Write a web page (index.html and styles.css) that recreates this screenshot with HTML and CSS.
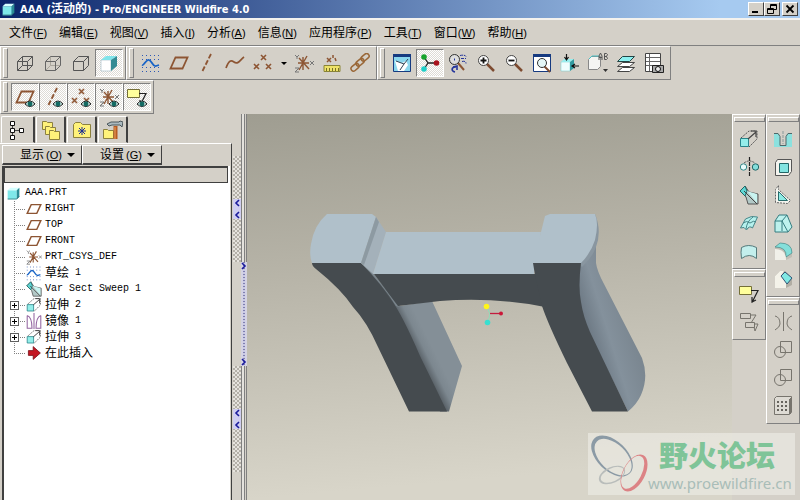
FILE: index.html
```html
<!DOCTYPE html>
<html lang="zh-CN">
<head>
<meta charset="utf-8">
<title>AAA (活动的) - Pro/ENGINEER Wildfire 4.0</title>
<link rel="stylesheet" href="styles.css">
</head>
<body>
<svg class="sprite" aria-hidden="true">
  <symbol id="part" viewBox="0 0 20 20"><path fill="#7fe8ea" d="M1 5h14v14H1z"/><path fill="#d5ffff" d="M1 5l4-4h14l-4 4z"/><path fill="#2b8c96" d="M15 5l4-4v14l-4 4z"/><path fill="none" stroke="#1d5c66" d="M1 18.500h14l4-4"/></symbol>
  <symbol id="wire" viewBox="0 0 20 20"><path d="M2.500 8.500h10v9h-10zM7.500 3.500h10v9h-10zM2.500 8.500l5-5M12.500 8.500l5-5M12.500 17.500l5-5M2.500 17.500l5-5" fill="none" stroke="#555"/></symbol>
  <symbol id="hidden" viewBox="0 0 20 20"><path d="M7.500 3.500v9h10M2.500 17.500l5-5" fill="none" stroke="#aaa69c"/><path d="M2.500 8.500h10v9h-10zM2.500 8.500l5-5h10v9l-5 5M12.500 8.500l5-5" fill="none" stroke="#666"/></symbol>
  <symbol id="nohidden" viewBox="0 0 20 20"><path d="M2.500 8.500h10v9h-10zM2.500 8.500l5-5h10v9l-5 5M12.500 8.500l5-5" fill="none" stroke="#555"/></symbol>
  <symbol id="shaded" viewBox="0 0 20 20"><path fill="#fff" stroke="#8ab" stroke-width=".5" d="M2 7h10v11H2z"/><path fill="#7fe4ea" d="M2 7l5-4h11l-6 4z"/><path fill="#348b94" d="M12 7l6-4v10l-6 5z"/></symbol>
  <symbol id="sketch" viewBox="0 0 20 20"><path d="M1 2.500h18M1 6.500h18M1 14.500h18M1 18.500h18" stroke="#2d58b5" stroke-dasharray="1 3"/><path d="M1 12c2 1 3-4 6-5 4-1 4 7 8 6l3-1" fill="none" stroke="#1763c6" stroke-width="1.800"/></symbol>
  <symbol id="plane" viewBox="0 0 20 20"><path d="M6.500 4.500h12l-5 11h-12z" fill="none" stroke="#8d5533" stroke-width="1.800"/></symbol>
  <symbol id="axis" viewBox="0 0 20 20"><path d="M14 1L5 19" stroke="#8d5533" stroke-width="1.800" stroke-dasharray="5 2"/></symbol>
  <symbol id="curve" viewBox="0 0 20 20"><path d="M1 15c3-8 5-8 8-6 4 3 6-2 10-5" fill="none" stroke="#8d5533" stroke-width="1.700"/></symbol>
  <symbol id="points" viewBox="0 0 20 20"><path d="M8 2l5 5m0-5L8 7M1 11l5 5m0-5l-5 5M13 11l5 5m0-5l-5 5" stroke="#8d5533" stroke-width="1.600"/></symbol>
  <symbol id="csys" viewBox="0 0 20 20"><path d="M5 5l10 11M13 3L5 17M9 4v13M4 10h11" stroke="#8d5533" stroke-width="1.400"/><path d="M1 2l2 2 2-2M3 4v2M16 8l4 4m0-4l-4 4M1 15h4l-4 4h4" fill="none" stroke="#777"/></symbol>
  <symbol id="measure" viewBox="0 0 20 20"><path d="M5 5l4 4m0-4L5 9M11 2v3M13 5l1 3" stroke="#8d5533" stroke-width="1.500"/><path fill="#eee268" stroke="#8a8436" d="M2 12.500h16v6H2z"/><path d="M4.500 15v3M7.500 15v3M10.500 15v3M13.500 15v3M16.500 15v3" stroke="#77702a"/></symbol>
  <symbol id="chain" viewBox="0 0 20 20"><g fill="none" stroke="#9a6737" stroke-width="1.500"><rect x="11" y="2" width="9" height="5" rx="2.500" transform="rotate(-40 15 5)"/><rect x="6" y="7" width="9" height="5" rx="2.500" transform="rotate(-40 10 10)"/><rect x="1" y="12" width="9" height="5" rx="2.500" transform="rotate(-40 5 15)"/></g></symbol>
  <symbol id="repaint" viewBox="0 0 20 20"><path fill="#8bd7ee" stroke="#163a80" d="M1.500 1.500h17v17h-17z"/><path fill="#163a80" d="M1 1h18v3H1z"/><path fill="#fff" d="M3 8l7 2 4-2 2 4-4 6H6z"/><path d="M4 8l8 3 4-5M12 11l-4 6" fill="none" stroke="#345"/></symbol>
  <symbol id="spin" viewBox="0 0 20 20"><path d="M4 4l4 6-4 6M8 10h9" fill="none" stroke="#222" stroke-width="1.300"/><circle cx="4" cy="4" r="2.800" fill="#16a32b"/><circle cx="4" cy="16" r="2.800" fill="#20cfc8"/><circle cx="16.500" cy="10" r="2.800" fill="#a9131e"/></symbol>
  <symbol id="orient" viewBox="0 0 20 20"><path d="M10 10l6 7" stroke="#8d5533" stroke-width="2"/><circle cx="6.500" cy="6.500" r="5" fill="#ddd" stroke="#333"/><path d="M6.500 5.500v2M12 2.500q5-1 6 1M13 5.500h5M14 8.500q4-1 4 2" fill="none" stroke="#24359c" stroke-dasharray="3 1"/><path d="M8 14c-5 0-5 4-1 5M5 14l4-1v4" fill="none" stroke="#24359c" stroke-width="1.600"/></symbol>
  <symbol id="zoomin" viewBox="0 0 20 20"><path d="M11 11l7 7" stroke="#7d4b30" stroke-width="2.500"/><circle cx="7.500" cy="7.500" r="5" fill="#fff" stroke="#444"/><path d="M4.500 7.500h6M7.500 4.500v6" stroke="#111" stroke-width="1.800"/></symbol>
  <symbol id="zoomout" viewBox="0 0 20 20"><path d="M11 11l7 7" stroke="#7d4b30" stroke-width="2.500"/><circle cx="7.500" cy="7.500" r="5" fill="#fff" stroke="#444"/><path d="M4.500 7.500h6" stroke="#111" stroke-width="1.800"/></symbol>
  <symbol id="refit" viewBox="0 0 20 20"><path fill="#fff" stroke="#163a80" d="M1.500 1.500h17v17h-17z"/><path fill="#163a80" d="M1 1h18v3H1z"/><path d="M12 13l6 6" stroke="#7d4b30" stroke-width="2"/><circle cx="10" cy="10" r="4.500" fill="#e5f7f7" stroke="#333"/></symbol>
  <symbol id="views" viewBox="0 0 20 20"><path fill="#effefe" stroke="#7cc" stroke-width=".5" d="M1 9h9v9H1z"/><path fill="#9ee" d="M1 9l3-3h10l-4 3z"/><path fill="#339a9f" d="M10 9l4-3v9l-4 3z"/><path d="M6.500 1v5M4.500 4l2 3 2-3M19 13h-6M15 11l-3 2 3 2" fill="none" stroke="#111" stroke-width="1.200"/></symbol>
  <symbol id="saved" viewBox="0 0 20 20"><path fill="#f5f5f3" stroke="#888" d="M.5 6.500l3-3h9v10l-3 3h-9z"/><path d="M1 6l3-3h7" fill="none" stroke="#49bfc5"/><path d="M11 7V3l1.500-3L14 3v4M11 4.500h3M16.500.500v6h2l1-1-1-2h-2 2l1-2-1-1z" fill="none" stroke="#555"/><path fill="#333" d="M15 16h5l-2.500 3z"/></symbol>
  <symbol id="layers" viewBox="0 0 20 20"><path d="M1.500 18.500l5-4h12l-5 4zM1.500 13.500l5-4h12l-5 4z" fill="#fff" stroke="#444"/><path d="M1.500 8.500l5-5h12l-5 5z" fill="#8cf0f0" stroke="#244"/></symbol>
  <symbol id="manager" viewBox="0 0 20 20"><path fill="#fff" stroke="#444" d="M1.500.5h15v18h-15z"/><path d="M2 4.500h14M2 8.500h14M2 12.500h8M5.500 1v17" stroke="#666"/><path fill="#aaa" stroke="#222" d="M8.500 12.500h11v7h-11z"/><circle cx="14" cy="16" r="2.500" fill="#eee" stroke="#111"/></symbol>
  <symbol id="eye" viewBox="0 0 20 20"><path d="M10 17q5-6 10 0q-5 5-10 0z" fill="#c6e4df" stroke="#222"/><circle cx="15" cy="17" r="2.400" fill="#146a62"/></symbol>
  <symbol id="note" viewBox="0 0 20 20"><path d="M.5 2.500h12v8H.500z" fill="#ffff9c" stroke="#746f37"/><path d="M12 6.500h7l-6 12M13 13v5l4-2" fill="none" stroke="#222" stroke-width="1.200"/></symbol>
  <symbol id="treeicon" viewBox="0 0 20 20"><path d="M4.500 3v14M5 10.500h10" stroke="#444"/><path d="M2.500 1.500h4v4h-4zM2.500 8.500h4v4h-4zM2.500 15.500h4v4h-4zM11.500 8.500h4v4h-4z" fill="#fff" stroke="#111"/></symbol>
  <symbol id="folder" viewBox="0 0 20 20"><path d="M1.500 17.500v-13l2-2h5l2 2h8v13z" fill="#fff27a" stroke="#8c813e"/></symbol>
  <symbol id="folders" viewBox="0 0 20 20"><g fill="#fff27a" stroke="#8c813e"><path d="M1.500 9.500v-8h4l1 1h5v7z"/><path d="M4.500 14.500v-8h4l1 1h5v7z"/><path d="M8.500 19.500v-9h4l1 1h5v8z"/></g></symbol>
  <symbol id="favorite" viewBox="0 0 20 20"><use href="#folder"/><path d="M10 7v8M6 11h8M7 8l6 6M13 8l-6 6" stroke="#1c2f93"/></symbol>
  <symbol id="hammer" viewBox="0 0 20 20"><path d="M.5 18.500v-9h4l1 1h5v8z" fill="#fff27a" stroke="#8c813e"/><path d="M12.500 6v13" stroke="#b75b22" stroke-width="4"/><path d="M12 7v12" stroke="#eda35c"/><path d="M4 4l4-2h8l1-1 3 1-1 5-2-2H9L6 6z" fill="#aab9bf" stroke="#4c575b"/></symbol>
  <symbol id="extrude" viewBox="0 0 20 20"><path d="M2 9l8-7h8v8l-8 8" fill="none" stroke="#555" stroke-dasharray="2 1"/><path d="M1.500 9.500h8v8h-8z" fill="#94eeea" stroke="#28858a"/><path d="M9 10l8-7M12 2h5v6" fill="none" stroke="#444" stroke-width="1.200"/></symbol>
  <symbol id="revolve" viewBox="0 0 20 20"><path d="M10.500 0v19" stroke="#222" stroke-width="1.200" stroke-dasharray="4 1"/><circle cx="4.500" cy="10" r="3.200" fill="#e8fbfa" stroke="#388"/><circle cx="16.500" cy="10" r="3.200" fill="#84dfdc" stroke="#266"/><path d="M5 6q5-4 11 0" fill="none" stroke="#555" stroke-dasharray="2 1"/></symbol>
  <symbol id="sweep" viewBox="0 0 20 20"><path d="M1 6l5-5 4 6 9 2v10H9L7 12z" fill="#b3c9c7" stroke="#555"/><path d="M1 6l5-5 2 5-2 5z" fill="#5fd8d6" stroke="#266"/><path d="M8 6l10 12V9z" fill="#c9f4f1"/><path d="M5 6l13 13" stroke="#444"/></symbol>
  <symbol id="blend" viewBox="0 0 20 20"><path d="M1.500 15l5-9q6-4 12-2l-5 11q-3-3-6 2-2-4-6-2z" fill="#b5f1ed" stroke="#478588"/><path d="M7 16q1-8 7-12M4 10q4-3 7 0 4-3 6-1" fill="none" stroke="#478588"/></symbol>
  <symbol id="style" viewBox="0 0 20 20"><path d="M2.500 17.500q-1-7 0-11 7-4 15 0v11q-7-6-15 0z" fill="#c3efed" stroke="#557a7b"/></symbol>
  <symbol id="hole" viewBox="0 0 20 20"><path d="M1 4h4l2 3v9h6V7l2-3h4v14H1z" fill="#8ce1de"/><path d="M1 4.500h4l2 3v9h6v-9l2-3h4" fill="none" stroke="#4e6668"/><path d="M10 2v13" stroke="#899" stroke-dasharray="3 1"/></symbol>
  <symbol id="shell" viewBox="0 0 20 20"><path d="M2.500 5.500l2-3h14v12l-3 4h-13z" fill="#f4f4ee" stroke="#555"/><path d="M6.500 6.500h9v9h-9z" fill="#82e4e0" stroke="#266"/></symbol>
  <symbol id="rib" viewBox="0 0 20 20"><path d="M2.500 17.500v-13l3-4v4l12 11-3 3z" fill="#f4f4ee" stroke="#666" stroke-dasharray="2 1"/><path d="M5.500 6.500v9h9z" fill="#8deae4" stroke="#276b6b"/></symbol>
  <symbol id="draft" viewBox="0 0 20 20"><path d="M2 8l4-6h8l5 12-4 5H2z" fill="#bdf1ed" stroke="#357d80"/><path d="M2 8h7l5-6M9 8v10M9 8l6 11" fill="none" stroke="#357d80"/></symbol>
  <symbol id="round" viewBox="0 0 20 20"><path d="M2 6l5-4q12 0 12 10v4l-6 3H2z" fill="#c1beb5"/><path d="M2 6l5-4q12 0 12 10l-6 4q1-10-11-10z" fill="#84dfda" stroke="#387d7d" stroke-width=".6"/><path d="M2 8q11 0 11 11H2z" fill="#f1f0e9"/></symbol>
  <symbol id="chamfer" viewBox="0 0 20 20"><path d="M2 7l5-5h5l7 7v7l-6 3H2z" fill="#b1aea4"/><path d="M2 7l5-5h4L8 7l5 6v6H2z" fill="#f4f2e9"/><path d="M8 7l4-4 7 6-5 6z" fill="#80e8e4" stroke="#357"/></symbol>
  <symbol id="notes" viewBox="0 0 20 20"><path d="M1.500 1.500h10v5h-10zM6.500 10.500h9v5h-9zM12 3h5l-5 8M15 12h4l-3 7-1-4" fill="none" stroke="#77746d"/></symbol>
  <symbol id="mirror" viewBox="0 0 20 20"><path d="M10.500 0v19M2 4q5 1 5 8 0 3-5 6M19 4q-5 1-5 8 0 3 5 6" fill="none" stroke="#77746d"/></symbol>
  <symbol id="mirrorc" viewBox="0 0 20 20"><path d="M10 0v20M1.500 3v16h6q0-14-6-16M18.500 3v16h-6q0-14 6-16" fill="none" stroke="#9364a0" stroke-width="1.300"/></symbol>
  <symbol id="merge" viewBox="0 0 20 20"><path d="M7.500 1.500h11v11h-11z" fill="none" stroke="#77746d"/><circle cx="7" cy="12" r="5.500" fill="none" stroke="#77746d"/></symbol>
  <symbol id="pattern" viewBox="0 0 20 20"><path d="M1.500 2.500l2-2h15v16l-2 2h-15z" fill="#dedbd4" stroke="#77746d"/><path d="M16.500 3v15M17.500 2v15" stroke="#77746d"/><path d="M4 6h11M4 10h11M4 14h11" stroke="#67645e" stroke-width="2" stroke-dasharray="2 2"/></symbol>
  <symbol id="arrow" viewBox="0 0 20 20"><path d="M3 7h6V2l9 8-9 8v-5H3z" fill="#c41622" stroke="#761018"/></symbol>
</svg>

<div class="app">
  <header class="titlebar">
    <svg class="app-icon" aria-hidden="true"><use href="#part"/></svg>
    <h1>AAA (<span>活动的</span>) - Pro/ENGINEER Wildfire 4.0</h1>
    <div class="window-buttons">
      <button aria-label="最小化"><svg viewBox="0 0 12 10"><path d="M2 8h6" stroke="#000" stroke-width="2"/></svg></button>
      <button aria-label="还原"><svg viewBox="0 0 12 10"><path d="M4.500 4V.500h6v5H8M4 1.500h7M1.500 4.500h6v5h-6zM1 5.500h7" fill="none" stroke="#000"/></svg></button>
      <button class="close" aria-label="关闭"><svg viewBox="0 0 12 10"><path d="M2.500 1.500l7 7M9.500 1.500l-7 7" stroke="#000" stroke-width="1.800"/></svg></button>
    </div>
  </header>

  <nav class="menubar">
    <button>文件<span>(<u>F</u>)</span></button>
    <button>编辑<span>(<u>E</u>)</span></button>
    <button>视图<span>(<u>V</u>)</span></button>
    <button>插入<span>(<u>I</u>)</span></button>
    <button>分析<span>(<u>A</u>)</span></button>
    <button>信息<span>(<u>N</u>)</span></button>
    <button>应用程序<span>(<u>P</u>)</span></button>
    <button>工具<span>(<u>T</u>)</span></button>
    <button>窗口<span>(<u>W</u>)</span></button>
    <button>帮助<span>(<u>H</u>)</span></button>
  </nav>

  <div class="toolbar-row">
    <div class="toolbar">
      <button class="tool" aria-label="线框"><svg><use href="#wire"/></svg></button>
      <button class="tool" aria-label="隐藏线"><svg><use href="#hidden"/></svg></button>
      <button class="tool" aria-label="无隐藏线"><svg><use href="#nohidden"/></svg></button>
      <button class="tool pressed" aria-label="着色"><svg><use href="#shaded"/></svg></button>
    </div>
    <div class="toolbar">
      <button class="tool" aria-label="草绘"><svg><use href="#sketch"/></svg></button>
      <button class="tool" aria-label="平面"><svg><use href="#plane"/></svg></button>
      <button class="tool" aria-label="轴"><svg><use href="#axis"/></svg></button>
      <button class="tool" aria-label="曲线"><svg><use href="#curve"/></svg></button>
      <button class="tool" aria-label="点"><svg><use href="#points"/></svg></button>
      <button class="tool-more" aria-label="更多点"></button>
      <button class="tool" aria-label="坐标系"><svg><use href="#csys"/></svg></button>
      <button class="tool" aria-label="测量"><svg><use href="#measure"/></svg></button>
      <button class="tool" aria-label="参照"><svg><use href="#chain"/></svg></button>
    </div>
    <div class="toolbar">
      <button class="tool" aria-label="重画"><svg><use href="#repaint"/></svg></button>
      <button class="tool pressed" aria-label="旋转中心"><svg><use href="#spin"/></svg></button>
      <button class="tool" aria-label="定向模式"><svg><use href="#orient"/></svg></button>
      <button class="tool" aria-label="放大"><svg><use href="#zoomin"/></svg></button>
      <button class="tool" aria-label="缩小"><svg><use href="#zoomout"/></svg></button>
      <button class="tool" aria-label="重新调整"><svg><use href="#refit"/></svg></button>
      <button class="tool" aria-label="重定向"><svg><use href="#views"/></svg></button>
      <button class="tool" aria-label="视图列表"><svg><use href="#saved"/></svg></button>
      <button class="tool" aria-label="层"><svg><use href="#layers"/></svg></button>
      <button class="tool" aria-label="视图管理器"><svg><use href="#manager"/></svg></button>
    </div>
  </div>
  <div class="toolbar-row">
    <div class="toolbar">
      <button class="tool pressed" aria-label="平面显示"><svg><use href="#plane"/><use href="#eye"/></svg></button>
      <button class="tool pressed" aria-label="轴显示"><svg><use href="#axis"/><use href="#eye"/></svg></button>
      <button class="tool pressed" aria-label="点显示"><svg><use href="#points"/><use href="#eye"/></svg></button>
      <button class="tool pressed" aria-label="坐标系显示"><svg><use href="#csys"/><use href="#eye"/></svg></button>
      <button class="tool pressed" aria-label="注释显示"><svg><use href="#note"/><use href="#eye"/></svg></button>
    </div>
  </div>

  <main class="workspace">
    <aside class="navigator">
      <div class="tabs" role="tablist">
        <button class="selected" role="tab" aria-label="模型树"><svg><use href="#treeicon"/></svg></button>
        <button role="tab" aria-label="文件夹"><svg><use href="#folders"/></svg></button>
        <button role="tab" aria-label="收藏夹"><svg><use href="#favorite"/></svg></button>
        <button role="tab" aria-label="连接"><svg><use href="#hammer"/></svg></button>
      </div>
      <div class="panel">
        <div class="panel-menu">
          <button>显示<span>(<u>O</u>)</span></button>
          <button>设置<span>(<u>G</u>)</span></button>
        </div>
        <div class="tree-area">
          <div class="tree-header"></div>
          <div class="root"><svg><use href="#part"/></svg><span class="latin">AAA.PRT</span></div>
          <ul class="tree">
            <li><span class="slot"></span><svg><use href="#plane"/></svg><span class="latin">RIGHT</span></li>
            <li><span class="slot"></span><svg><use href="#plane"/></svg><span class="latin">TOP</span></li>
            <li><span class="slot"></span><svg><use href="#plane"/></svg><span class="latin">FRONT</span></li>
            <li><span class="slot"></span><svg><use href="#csys"/></svg><span class="latin">PRT_CSYS_DEF</span></li>
            <li><span class="slot"></span><svg><use href="#sketch"/></svg>草绘<span class="latin"> 1</span></li>
            <li><span class="slot"></span><svg><use href="#sweep"/></svg><span class="latin">Var Sect Sweep 1</span></li>
            <li><button class="slot expand" aria-label="展开"></button><svg><use href="#extrude"/></svg>拉伸<span class="latin"> 2</span></li>
            <li><button class="slot expand" aria-label="展开"></button><svg><use href="#mirrorc"/></svg>镜像<span class="latin"> 1</span></li>
            <li><button class="slot expand" aria-label="展开"></button><svg><use href="#extrude"/></svg>拉伸<span class="latin"> 3</span></li>
            <li><span class="slot"></span><svg><use href="#arrow"/></svg>在此插入</li>
          </ul>
        </div>
      </div>
    </aside>

    <div class="sash">
      <button class="grip" aria-label="收起导航器"><svg viewBox="0 0 8 20"><path d="M6 1L3 4l3 3M6 13l-3 3 3 3" fill="none" stroke="#1b1b9c" stroke-width="1.600"/></svg></button>
      <button class="grip" aria-label="收起浏览器"><svg viewBox="0 0 8 20"><path d="M6 1L3 4l3 3M6 13l-3 3 3 3" fill="none" stroke="#1b1b9c" stroke-width="1.600"/></svg></button>
    </div>
    <div class="divider">
      <button class="opener" aria-label="展开浏览器">
        <svg viewBox="0 0 6 8"><path d="M1 1l3 3-3 3" fill="none" stroke="#1b1b9c" stroke-width="1.600"/></svg>
        <svg viewBox="0 0 6 8"><path d="M1 1l3 3-3 3" fill="none" stroke="#1b1b9c" stroke-width="1.600"/></svg>
      </button>
    </div>

    <section class="view">
      <svg viewBox="247 114 485 386" role="img" aria-label="零件模型">
        <defs>
          <linearGradient id="inner" gradientUnits="userSpaceOnUse" x1="414" y1="346" x2="428" y2="339"><stop offset="0" stop-color="#596167"/><stop offset=".5" stop-color="#7c878f"/><stop offset="1" stop-color="#848f97"/></linearGradient>
          <linearGradient id="outer" gradientUnits="userSpaceOnUse" x1="586" y1="335" x2="628" y2="322"><stop offset="0" stop-color="#697580"/><stop offset=".5" stop-color="#84919c"/><stop offset="1" stop-color="#7b8791"/></linearGradient>
        </defs>
        <path fill="url(#inner)" d="M361 263L373 274L400 306L432 301L462 366L449 411.500H440L385 300Z"/>
        <path fill="#454b4f" d="M312 263Q312 266 316 269Q341 289 353 307Q367 322 378 347L409 411.500H447L420 356Q402 314 390 298Q380 283 361 263Z"/>
        <path fill="#7b868d" d="M361 263L364 265L374 274L399 307L396 306Q384 286 361 263Z"/>
        <path fill="#b0c0ca" d="M312 263Q309 255 311 244Q314 225 327 214H372L376 217L361 263Z"/>
        <path fill="#a4b1ba" d="M376 217L386 232L373 274L361 263Z"/>
        <path fill="#8d9aa2" d="M376 217L379 222L364 265L361 263Z"/>
        <path fill="#b0c0ca" d="M386 232H541L534 274H373Z"/>
        <path fill="#454b4f" d="M374 274H545V307Q495 297 440 301L398 306Z"/>
        <path fill="url(#outer)" d="M579 266L596 244V263Q597 271 604 284L642 358Q649 377 641 395Q637 404 628 411.500L578 310Z"/>
        <path fill="#8996a0" d="M595 214Q602 231 596 247Q592 258 582 267L578 262Z"/>
        <path fill="#454b4f" d="M533 263H581Q578 287 581 302Q583 316 590 332L628 411.500H592L567 363Q548 324 542 306L535 275Z"/>
        <path fill="#b0c0ca" d="M533 263L541 232L545 216L550 214H595Q599 223 595 240Q591 253 581 263Z"/>
        <path d="M487 307L490 314L488 322" fill="none" stroke="#8dddb8"/><path d="M490 313.500h11" fill="none" stroke="#c41c3e" stroke-width="1.300"/>
        <circle cx="486.500" cy="306.500" r="2.800" fill="#fff51a"/><circle cx="487.500" cy="322.500" r="2.800" fill="#38dfd0"/><circle cx="501" cy="313.500" r="2" fill="#cb1738"/>
      </svg>
    </section>

    <div class="rail">
      <div class="rail-group">
        <button class="tool" aria-label="拉伸"><svg><use href="#extrude"/></svg></button>
        <button class="tool" aria-label="旋转"><svg><use href="#revolve"/></svg></button>
        <button class="tool" aria-label="可变剖面扫描"><svg><use href="#sweep"/></svg></button>
        <button class="tool" aria-label="边界混合"><svg><use href="#blend"/></svg></button>
        <button class="tool" aria-label="造型"><svg><use href="#style"/></svg></button>
      </div>
      <div class="rail-group">
        <button class="tool" aria-label="注释"><svg><use href="#note"/></svg></button>
        <button class="tool" aria-label="注释传播" disabled><svg><use href="#notes"/></svg></button>
      </div>
    </div>
    <div class="rail">
      <div class="rail-group">
        <button class="tool" aria-label="孔"><svg><use href="#hole"/></svg></button>
        <button class="tool" aria-label="壳"><svg><use href="#shell"/></svg></button>
        <button class="tool" aria-label="筋"><svg><use href="#rib"/></svg></button>
        <button class="tool" aria-label="拔模"><svg><use href="#draft"/></svg></button>
        <button class="tool" aria-label="倒圆角"><svg><use href="#round"/></svg></button>
        <button class="tool" aria-label="倒角"><svg><use href="#chamfer"/></svg></button>
      </div>
      <div class="rail-group">
        <button class="tool" aria-label="镜像" disabled><svg><use href="#mirror"/></svg></button>
        <button class="tool" aria-label="合并" disabled><svg><use href="#merge"/></svg></button>
        <button class="tool" aria-label="修剪" disabled><svg><use href="#merge"/></svg></button>
        <button class="tool" aria-label="阵列" disabled><svg><use href="#pattern"/></svg></button>
      </div>
    </div>

    <div class="watermark">
      <svg viewBox="0 0 60 60" aria-hidden="true">
        <g transform="translate(24 22) rotate(44)"><path fill="#8b9aa5" fill-rule="evenodd" d="M-25 0A25 15 0 1 1 25 0A25 15 0 1 1-25 0ZM-21 0A22.500 13 0 1 0 24 0A22.500 13 0 1 0-21 0Z"/></g>
        <g transform="translate(24 41) rotate(-25)"><path fill="#b9bdbb" fill-rule="evenodd" d="M-14 0A14 8 0 1 1 14 0A14 8 0 1 1-14 0ZM-12 0A12.500 6.500 0 1 0 13 0A12.500 6.500 0 1 0-12 0Z"/></g>
        <g transform="translate(46 39) rotate(-62)"><path fill="#dc8385" fill-rule="evenodd" d="M-20 0A20 11 0 1 1 20 0A20 11 0 1 1-20 0ZM-18 -1.500A18 9 0 1 0 18-1.500A18 9 0 1 0-18-1.500Z"/></g>
      </svg>
      <div class="watermark-text"><strong>野火论坛</strong><span>www.proewildfire.cn</span></div>
    </div>
  </main>
</div>
</body>
</html>
```
FILE: styles.css
```css
* { box-sizing: border-box; }

body {
  margin: 0;
  background: #d4d0c8;
  color: #000;
  font: 12px/16px "Liberation Sans", "Noto Sans CJK SC", sans-serif;
}

button {
  margin: 0;
  padding: 0;
  border: 0;
  background: none;
  color: inherit;
  font: inherit;
}

svg { display: block; }

.sprite { display: none; }

.app {
  display: flex;
  flex-direction: column;
  min-height: 100vh;
}

/* Title bar */
.titlebar {
  display: flex;
  align-items: center;
  height: 18px;
  padding: 0 2px;
  background: linear-gradient(90deg, #0a246a, #a6caf0 90%);
}

.app-icon { width: 13px; height: 13px; }

.titlebar h1 {
  flex: 1;
  margin: 0 0 0 5px;
  color: #fff;
  font: bold 11px/18px "DejaVu Sans Condensed", "Noto Sans CJK SC", sans-serif;
  white-space: nowrap;
}

.titlebar h1 span { font-size: 12px; }

.window-buttons { display: flex; }

.window-buttons button {
  width: 16px;
  height: 14px;
  padding: 1px;
  border: 1px solid;
  border-color: #fff #404040 #404040 #fff;
  background: #d4d0c8;
}

.window-buttons svg { width: 12px; height: 10px; }
.window-buttons .close { margin-left: 2px; }

/* Menu bar */
.menubar {
  display: flex;
  gap: 12px;
  height: 28px;
  padding: 0 9px;
  border-top: 2px solid #f4f2ee;
  border-bottom: 1px solid #808080;
}

.menubar button { white-space: nowrap; }
.menubar span, .panel-menu span { font-size: 11px; }

/* Toolbars */
.toolbar-row { display: flex; height: 34px; }

.toolbar {
  display: flex;
  align-items: center;
  padding: 0 2px;
  border: 1px solid;
  border-color: #fff #808080 #808080 #fff;
}

.toolbar::before {
  content: "";
  width: 3px;
  height: 28px;
  margin-right: 3px;
  border: 1px solid;
  border-color: #fff #808080 #808080 #fff;
}

.tool {
  display: grid;
  place-items: center;
  width: 28px;
  height: 28px;
}

.tool svg { width: 20px; height: 20px; overflow: visible; }

.pressed {
  border: 1px solid;
  border-color: #808080 #fff #fff #808080;
  background: repeating-conic-gradient(#fff 0 25%, #dedbd5 0 50%) 0 0 / 2px 2px;
}

.tool-more { width: 13px; height: 28px; }

.tool-more::before {
  content: "";
  display: block;
  margin: 0 auto;
  width: 0;
  border: 3px solid transparent;
  border-top-color: #000;
  border-bottom: 0;
}

/* Workspace */
.workspace {
  position: relative;
  display: flex;
  flex: 1;
}

.navigator {
  display: flex;
  flex-direction: column;
  width: 232px;
}

.tabs {
  display: flex;
  gap: 1px;
  height: 29px;
  padding: 2px 1px 0;
}

.tabs button {
  display: grid;
  place-items: center;
  width: 30px;
  border: 1px solid;
  border-color: #fff #404040 transparent #fff;
  border-right-width: 2px;
  border-radius: 2px 2px 0 0;
}

.tabs .selected { width: 34px; }
.tabs svg { width: 20px; height: 20px; }

.panel {
  display: flex;
  flex: 1;
  flex-direction: column;
  padding: 1px 0 0 2px;
  border-top: 1px solid #fff;
  border-right: 1px solid #404040;
}

.panel-menu { display: flex; }

.panel-menu button {
  display: flex;
  align-items: center;
  justify-content: center;
  gap: 2px;
  width: 80px;
  height: 20px;
  padding-left: 11px;
  border: 1px solid;
  border-color: #fff #404040 #404040 #fff;
  border-bottom-width: 2px;
}

.panel-menu button::after {
  content: "";
  margin-left: 3px;
  border: 4px solid transparent;
  border-top-color: #000;
  border-bottom: 0;
}

.tree-area {
  flex: 1;
  margin: 1px 1px 0 0;
  border-left: 2px solid #404040;
  background: #fff;
}

.tree-header {
  height: 17px;
  margin: 0 2px 2px 0;
  border: 1px solid #404040;
  border-top-width: 2px;
  background: #d4d0c8;
}

.root {
  display: flex;
  align-items: center;
  gap: 5px;
  height: 16px;
  padding-left: 3px;
}

.root svg { width: 13px; height: 13px; }

.latin {
  font: 10px/16px "Liberation Mono", monospace;
  white-space: pre;
}

.tree { margin: 0; padding: 0; list-style: none; }

.tree li {
  display: flex;
  align-items: center;
  height: 16px;
  padding-left: 6px;
  background:
    repeating-linear-gradient(#808080 0 1px, transparent 1px 2px) 10px 0 / 1px 100% no-repeat,
    repeating-linear-gradient(90deg, #808080 0 1px, transparent 1px 2px) 10px 8px / 12px 1px no-repeat;
}

.tree li:last-child { background-size: 1px 8px, 12px 1px; }

.tree svg {
  width: 16px;
  height: 16px;
  margin: 0 3px 0 7px;
}

.slot { width: 9px; height: 9px; }

.expand {
  border: 1px solid #606060;
  background:
    linear-gradient(#000 0 0) center / 5px 1px no-repeat,
    linear-gradient(#000 0 0) center / 1px 5px no-repeat,
    #fff;
}

/* Sashes */
.sash {
  display: flex;
  flex-direction: column;
  gap: 104px;
  width: 9px;
  padding: 42px 0 0 1px;
}

.grip {
  display: grid;
  place-items: center;
  height: 106px;
  background: repeating-conic-gradient(#b4b0a8 0 25%, #e6e3de 0 50%) 0 0 / 4px 4px;
}

.grip svg { width: 8px; height: 20px; background: #cfcdf0; }

.divider {
  width: 6px;
  padding-top: 148px;
  background: linear-gradient(90deg, #808080 0 1px, #e4e2dd 1px 3px, #808080 3px 4px, #d4d0c8 4px 5px, #808080 5px);
}

.opener {
  display: flex;
  flex-direction: column;
  justify-content: space-between;
  width: 6px;
  height: 104px;
  background: repeating-linear-gradient(#7f7fb0 0 1px, #c9c9e4 1px 3px) 2px 0 / 2px 100% no-repeat #d4d3e4;
}

.opener svg { width: 6px; height: 8px; }

/* Graphics window */
.view {
  flex: 1;
  min-width: 0;
  background: linear-gradient(175deg, #9f9d91, #b8b5a9 40%, #d8d5c9 90%);
}

.view svg { width: 100%; height: auto; }

/* Feature toolbars */
.rail { width: 34px; }

.rail-group {
  display: flex;
  flex-direction: column;
  align-items: center;
  padding-bottom: 3px;
  border: 1px solid;
  border-color: #fff #808080 #808080 #fff;
}

.rail-group::before {
  content: "";
  width: 29px;
  height: 3px;
  margin: 2px 0 3px;
  border: 1px solid;
  border-color: #fff #808080 #808080 #fff;
}

/* Forum mark laid over the lower right corner */
.watermark {
  position: absolute;
  right: 5px;
  bottom: 5px;
  display: flex;
  height: 62px;
  width: 207px;
  background: rgb(235 233 226 / 70%);
}

.watermark svg { width: 60px; height: 60px; margin-top: 1px; }

.watermark-text {
  display: flex;
  flex-direction: column;
  white-space: nowrap;
}

.watermark strong {
  padding-left: 11px;
  color: #7fc498;
  font: 900 29px/42px "Noto Sans CJK SC", sans-serif;
}

.watermark-text span {
  color: #a9bdb8;
  font: 15px/16px "Noto Sans", sans-serif;
}
```
